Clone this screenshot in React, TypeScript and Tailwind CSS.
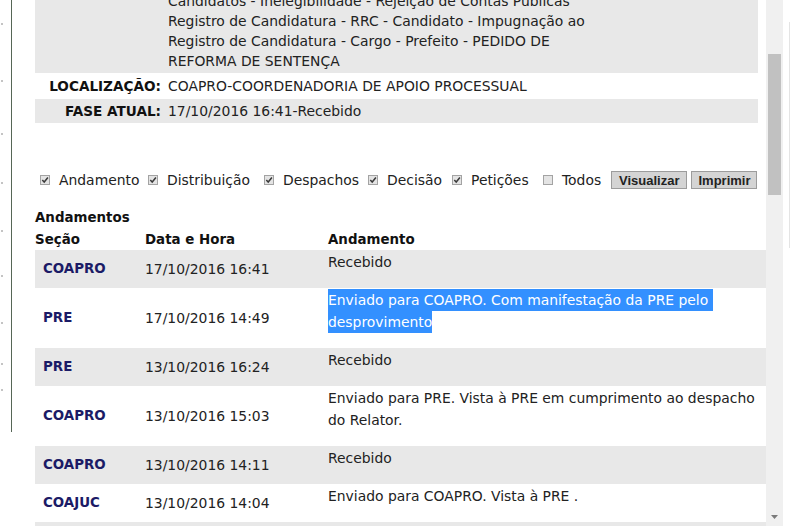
import type { ReactNode } from "react";

const dots = [23, 57, 53, 49, 48, 45, 47, 41, 26];

const filters = [
  { label: "Andamento", checked: true, width: "w-[108px]" },
  { label: "Distribuição", checked: true, width: "w-[116px]" },
  { label: "Despachos", checked: true, width: "w-[104px]" },
  { label: "Decisão", checked: true, width: "w-[84px]" },
  { label: "Petições", checked: true, width: "w-[91px]" },
  { label: "Todos", checked: false, width: "w-[68px]" },
];

type Row = { secao: string; data: string; lines: string[]; selected?: boolean };

const rows: Row[] = [
  { secao: "COAPRO", data: "17/10/2016 16:41", lines: ["Recebido"] },
  {
    secao: "PRE",
    data: "17/10/2016 14:49",
    lines: ["Enviado para COAPRO. Com manifestação da PRE pelo ", "desprovimento"],
    selected: true,
  },
  { secao: "PRE", data: "13/10/2016 16:24", lines: ["Recebido"] },
  {
    secao: "COAPRO",
    data: "13/10/2016 15:03",
    lines: ["Enviado para PRE. Vista à PRE em cumprimento ao despacho", "do Relator."],
  },
  { secao: "COAPRO", data: "13/10/2016 14:11", lines: ["Recebido"] },
  { secao: "COAJUC", data: "13/10/2016 14:04", lines: ["Enviado para COAPRO. Vista à PRE ."] },
  { secao: "COAJUC", data: "13/10/2016 13:52", lines: ["Recebido"] },
];

function Checkbox({ checked }: { checked: boolean }) {
  return (
    <span className="flex h-[10px] w-[10px] shrink-0 items-center justify-center border border-[#a3a3a3] bg-[#e4e4e4]">
      {checked && (
        <svg width="8" height="8" viewBox="0 0 8 8">
          <path d="M1.3 4.1 L3.2 6.1 L6.9 1.6" fill="none" stroke="#3a3a3a" strokeWidth="1.5" />
        </svg>
      )}
    </span>
  );
}

function InfoRow({ label, gray, children }: { label: string; gray?: boolean; children: ReactNode }) {
  return (
    <div className={`flex py-[2px] leading-[20px] ${gray ? "bg-[#e8e8e8]" : ""}`}>
      <div className="w-[128px] shrink-0 pr-[2px] text-right text-[13.6px] font-bold text-[#111]">{label}</div>
      <div className="pl-[5px] whitespace-nowrap">{children}</div>
    </div>
  );
}

export default function App() {
  return (
    <div className="flex h-[526px] w-[791px] overflow-hidden bg-white font-['DejaVu_Sans',Verdana,sans-serif] text-[13.9px] text-[#222]">
      {/* left rail of the page behind */}
      <div className="flex w-[35px] shrink-0">
        <div className="flex w-[11px] flex-col">
          {dots.map((m, i) => (
            <span key={i} style={{ marginTop: m - (i === 0 ? 0 : 2) }} className="ml-px h-[2px] w-[2px] bg-[#c4c4c4]" />
          ))}
        </div>
        <div className="h-[432px] w-px bg-[#566656]" />
      </div>

      {/* scrolled content */}
      <div className="w-[731px] shrink-0 -mt-[11px]">
        <div className="flex w-[723px] flex-col gap-[1px]">
          <InfoRow label="" gray>
            <div>Candidatos - Inelegibilidade - Rejeição de Contas Públicas</div>
            <div>Registro de Candidatura - RRC - Candidato - Impugnação ao</div>
            <div>Registro de Candidatura - Cargo - Prefeito - PEDIDO DE</div>
            <div>REFORMA DE SENTENÇA</div>
          </InfoRow>
          <InfoRow label="LOCALIZAÇÃO:">COAPRO-COORDENADORIA DE APOIO PROCESSUAL</InfoRow>
          <InfoRow label="FASE ATUAL:" gray>
            17/10/2016 16:41-Recebido
          </InfoRow>
        </div>

        <div className="mt-[46px] flex h-[22px] items-center pl-[5px]">
          {filters.map((f) => (
            <div key={f.label} className={`flex items-center gap-[9px] ${f.width}`}>
              <Checkbox checked={f.checked} />
              <span className="whitespace-nowrap">{f.label}</span>
            </div>
          ))}
          <div className="flex gap-[4px] font-['Liberation_Sans',Arial,sans-serif] text-[13px] font-bold text-[#222]">
            <button className="h-[18px] border border-[#9c9c9c] bg-[#d4d4d4] px-[7px] leading-none">Visualizar</button>
            <button className="h-[18px] border border-[#9c9c9c] bg-[#d4d4d4] px-[6px] leading-none">Imprimir</button>
          </div>
        </div>

        <div className="mt-[17px] text-[13.4px] font-bold leading-[20px] text-[#111]">Andamentos</div>
        <div className="flex pt-[2px] text-[13.4px] font-bold leading-[20px] text-[#111]">
          <div className="w-[110px]">Seção</div>
          <div className="w-[183px]">Data e Hora</div>
          <div className="flex-1">Andamento</div>
        </div>

        <div className="flex flex-col">
          {rows.map((r, i) => (
            <div key={i} className={`flex ${i % 2 === 0 ? "bg-[#e8e8e8]" : "bg-white"}`}>
              <div className="flex w-[110px] items-center pl-[8px] text-[13.4px] font-bold text-[#1b1b66]">{r.secao}</div>
              <div className="flex w-[183px] items-center">{r.data}</div>
              <div className="flex-1 pt-[1px] pb-[15px] leading-[22px]">
                {r.lines.map((l, j) => (
                  <div key={j} className="whitespace-pre">
                    {r.selected ? (
                      <span className="inline-block h-[22px] bg-[#3390ff] text-white">{l}</span>
                    ) : (
                      l
                    )}
                  </div>
                ))}
              </div>
            </div>
          ))}
        </div>
      </div>

      {/* scrollbar */}
      <div className="flex w-[17px] shrink-0 flex-col bg-[#f0f0f0]">
        <div className="mx-[2px] mt-[54px] h-[141px] bg-[#c1c1c1]" />
        <div className="flex-1" />
        <div className="flex h-[14px] items-start justify-center pt-[3px]">
          <svg width="7" height="4" viewBox="0 0 7 4">
            <path d="M0 0 L7 0 L3.5 4 Z" fill="#7a7a7a" />
          </svg>
        </div>
      </div>

      <div className="flex w-[8px] shrink-0 justify-end pr-[1px] pt-[22px]">
        <div className="h-[226px] w-px bg-[#e4e4e4]" />
      </div>
    </div>
  );
}
